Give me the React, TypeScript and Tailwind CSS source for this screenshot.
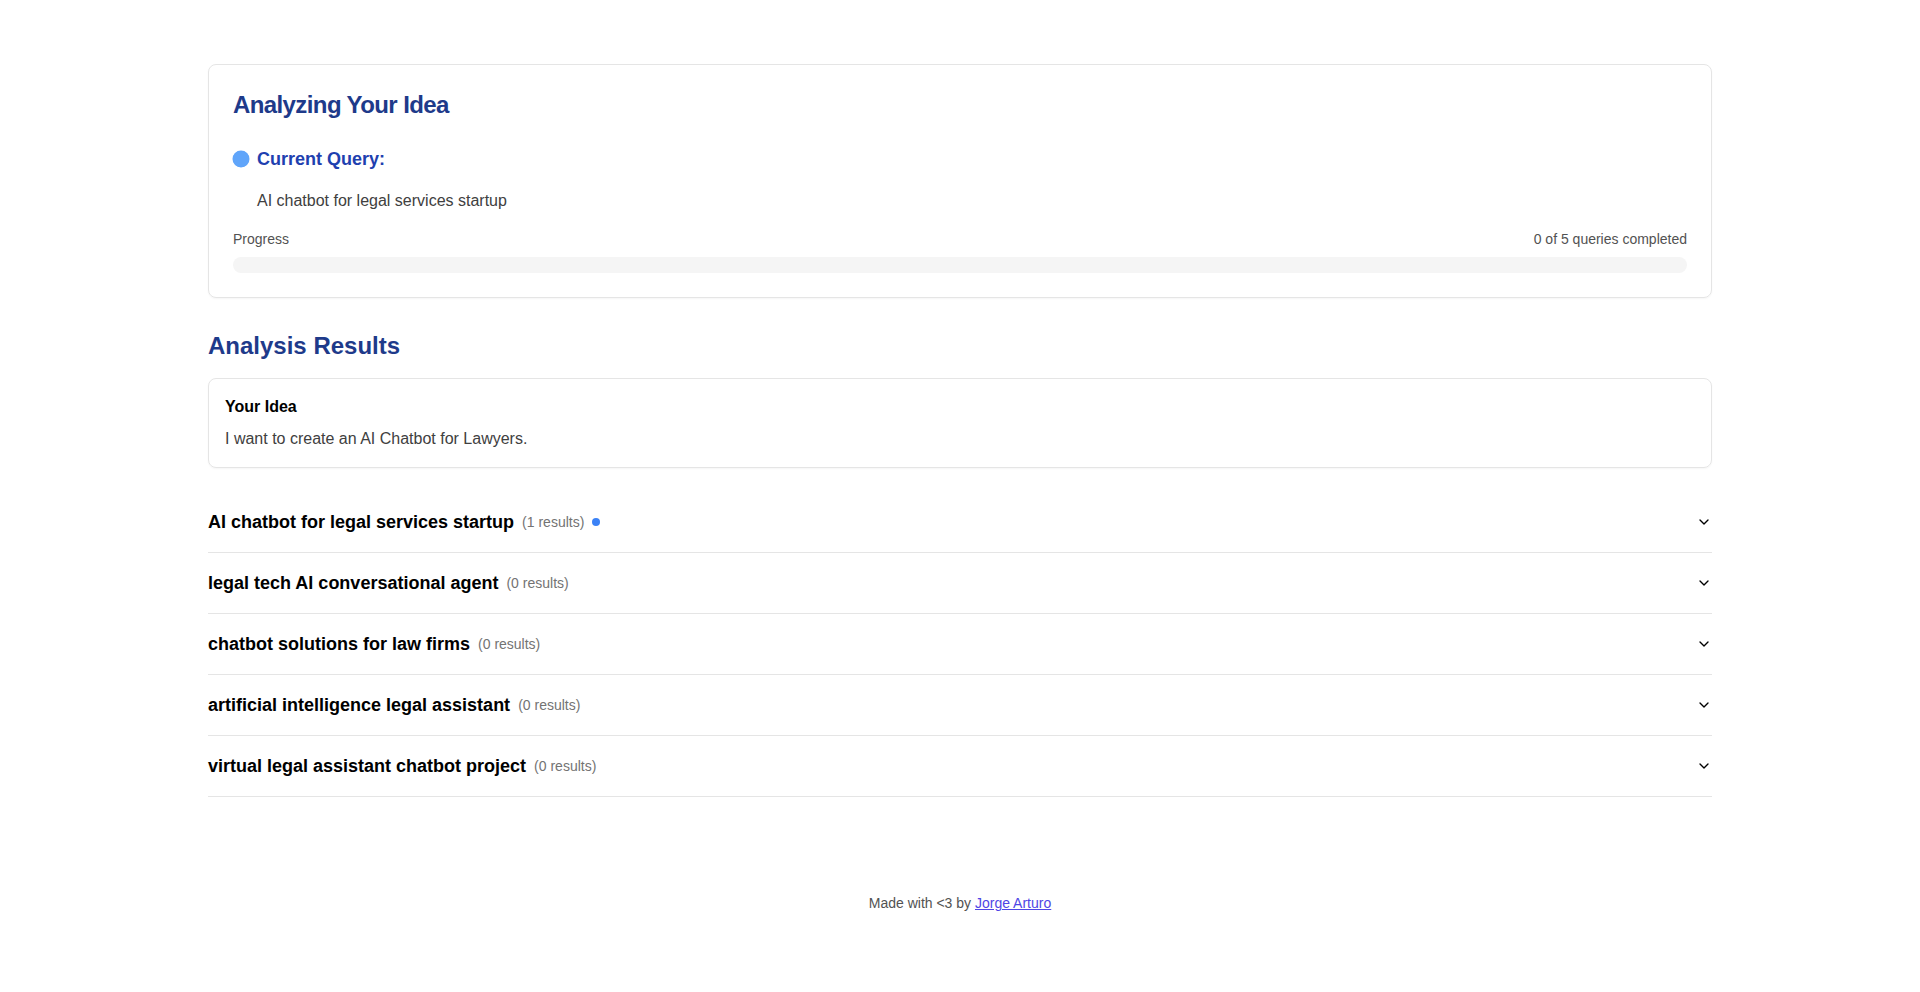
import { ChevronDown } from 'lucide-react';

const queries = [
  { text: 'AI chatbot for legal services startup', count: 1, active: true },
  { text: 'legal tech AI conversational agent', count: 0, active: false },
  { text: 'chatbot solutions for law firms', count: 0, active: false },
  { text: 'artificial intelligence legal assistant', count: 0, active: false },
  { text: 'virtual legal assistant chatbot project', count: 0, active: false },
];

export default function App() {
  return (
    <div className="min-h-[992px] bg-white font-['Liberation_Sans',Arial,sans-serif] text-black">
      <main className="mx-auto w-[1536px] px-4 pt-16">
        <section className="rounded-lg border border-[#e5e5e5] p-6 shadow-[0_1px_2px_rgba(0,0,0,0.04)]">
          <h2 className="mb-6 text-2xl font-bold tracking-tight text-[#1e3a8a]">Analyzing Your Idea</h2>
          <div className="flex items-center gap-2">
            <span className="h-4 w-4 rounded-full bg-[#60a5fa] shadow-[0_0_0_0.5px_#60a5fa]" />
            <span className="text-lg font-bold text-[#1e40af]">Current Query:</span>
          </div>
          <p className="mt-4 pl-6 text-base text-[#404040]">AI chatbot for legal services startup</p>
          <div className="mt-4 flex justify-between text-sm text-[#525252]">
            <span>Progress</span>
            <span>0 of 5 queries completed</span>
          </div>
          <div className="mt-2 h-4 rounded-full bg-[#f5f5f5]" />
        </section>

        <h2 className="mt-8 mb-4 text-2xl font-bold text-[#1e3a8a]">Analysis Results</h2>

        <section className="rounded-lg border border-[#e5e5e5] p-4 shadow-[0_1px_2px_rgba(0,0,0,0.04)]">
          <h3 className="mb-2 text-base font-bold">Your Idea</h3>
          <p className="text-base text-[#404040]">I want to create an AI Chatbot for Lawyers.</p>
        </section>

        <div className="mt-6">
          {queries.map((q) => (
            <div key={q.text} className="flex h-[61px] items-center justify-between border-b border-[#e5e5e5]">
              <div className="flex items-center gap-2">
                <span className="text-lg font-bold">{q.text}</span>
                <span className="text-sm text-[#737373]">({q.count} results)</span>
                {q.active && <span className="h-2 w-2 rounded-full bg-[#3b82f6]" />}
              </div>
              <ChevronDown className="h-4 w-4" />
            </div>
          ))}
        </div>

        <footer className="mt-24 text-center text-sm text-[#525252]">
          Made with &lt;3 by{' '}
          <a href="#" className="text-[#4f46e5] underline">Jorge Arturo</a>
        </footer>
      </main>
    </div>
  );
}
